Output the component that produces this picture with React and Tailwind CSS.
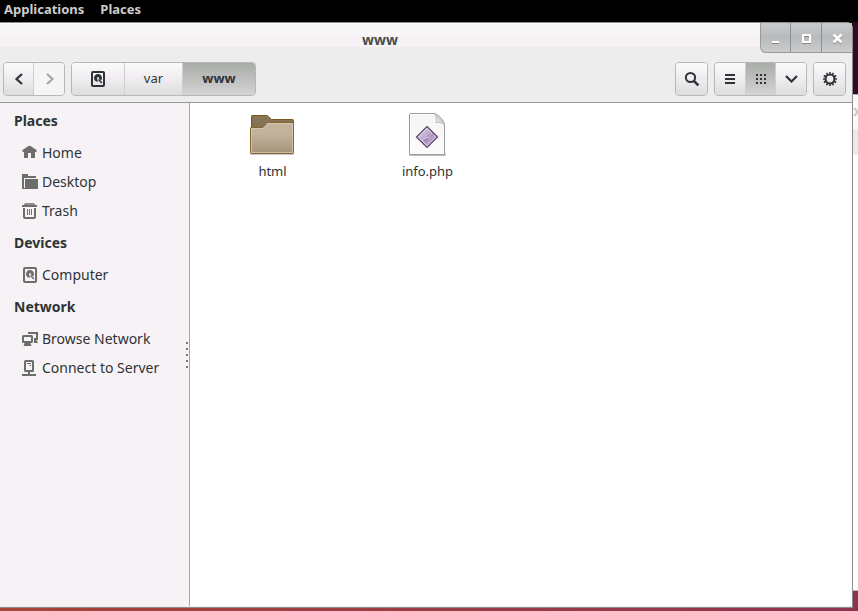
import clsx from "clsx";

const sidebar = [
  {
    title: "Places",
    items: [
      { label: "Home", Icon: HomeIcon },
      { label: "Desktop", Icon: DesktopIcon },
      { label: "Trash", Icon: TrashIcon },
    ],
  },
  { title: "Devices", items: [{ label: "Computer", Icon: DriveIcon }] },
  {
    title: "Network",
    items: [
      { label: "Browse Network", Icon: NetworkIcon },
      { label: "Connect to Server", Icon: ServerIcon },
    ],
  },
];

const files = [
  { name: "html", Icon: FolderIcon },
  { name: "info.php", Icon: PhpFileIcon },
];

function HomeIcon() {
  return (
    <svg width="16" height="16" viewBox="0 0 16 16" fill="currentColor" aria-hidden="true">
      <path d="M6.5 1 H8.500 L14.500 5 V7 H13 V13 H9 V8 H6 V13 H2 V7 H.5 V5 Z" />
    </svg>
  );
}

function DesktopIcon() {
  return (
    <svg width="16" height="16" viewBox="0 0 16 16" fill="currentColor" aria-hidden="true">
      <path d="M0 0 H6 V2 H14 V4 H2 V14 H16 V15 H0 Z" />
      <path d="M3 5 H16 V15 H3 Z" />
    </svg>
  );
}

function TrashIcon() {
  return (
    <svg width="16" height="16" viewBox="0 0 16 16" fill="none" stroke="currentColor" aria-hidden="true">
      <path d="M0 3 H15" strokeWidth="2" />
      <path d="M3 2 V1.500 Q3 1 4 1 H11 Q12 1 12 1.500 V2" strokeWidth="1.500" />
      <path d="M2 5 V14 Q2 15 3 15 H12 Q13 15 13 14 V5" strokeWidth="2" />
      <path d="M5.500 6 V12 M7.500 6 V12 M9.500 6 V12" />
    </svg>
  );
}

function DriveIcon() {
  return (
    <svg width="16" height="16" viewBox="0 0 16 16" fill="none" aria-hidden="true">
      <rect x="2" y="1" width="12" height="14" rx="1" stroke="currentColor" strokeWidth="2" />
      <path
        d="M8 3 C10.300 3 12 4.700 12 7 C12 8.200 11.500 9 11 9.600 L9 7.800 V6.200 H7.200 V8 L8 10.800 C5.800 11 4 9.200 4 7 C4 4.700 5.700 3 8 3 Z"
        fill="currentColor"
      />
      <path d="M8.500 8.500 L11.800 12" stroke="currentColor" strokeWidth="1.600" />
    </svg>
  );
}

function NetworkIcon() {
  return (
    <svg width="16" height="16" viewBox="0 0 16 16" fill="none" stroke="currentColor" strokeWidth="2" aria-hidden="true">
      <path d="M7 3 V2 H15 V8 H12" />
      <rect x="1" y="5" width="9" height="6" rx=".5" />
      <path d="M3 11 H8 L9.500 15 H1.500 Z" fill="currentColor" stroke="none" />
      <path d="M12 9 H14.500 L16 12 H12 Z" fill="currentColor" stroke="none" />
    </svg>
  );
}

function ServerIcon() {
  return (
    <svg width="16" height="16" viewBox="0 0 16 16" fill="none" stroke="currentColor" aria-hidden="true">
      <rect x="3" y="1" width="8" height="10" rx=".6" strokeWidth="2" />
      <path d="M5 3.500 H9 M7.500 5.500 H9" />
      <path d="M7 11 V14 M0 15 H14" strokeWidth="2" />
    </svg>
  );
}

function SearchIcon() {
  return (
    <svg width="16" height="16" viewBox="0 0 16 16" fill="none" stroke="currentColor" aria-hidden="true">
      <circle cx="6.5" cy="6.5" r="4.6" strokeWidth="2" />
      <path d="M9.8 9.8 L14.4 14.4" strokeWidth="2.6" />
    </svg>
  );
}

function ListIcon() {
  return (
    <svg width="16" height="16" viewBox="0 0 16 16" fill="currentColor" aria-hidden="true">
      <path d="M3 3 H13 V5 H3 Z M3 7 H13 V9 H3 Z M3 11 H13 V13 H3 Z" />
    </svg>
  );
}

function GridIcon() {
  return (
    <svg width="16" height="16" viewBox="0 0 16 16" stroke="currentColor" strokeWidth="2" strokeDasharray="2 2" aria-hidden="true">
      <path d="M3 4 H13 M3 8 H13 M3 12 H13" />
    </svg>
  );
}

function Chevron({ d }) {
  return (
    <svg width="16" height="16" viewBox="0 0 16 16" fill="none" stroke="currentColor" strokeWidth="2.2" aria-hidden="true">
      <path d={d} />
    </svg>
  );
}

function GearIcon() {
  return (
    <svg width="16" height="16" viewBox="0 0 16 16" fill="none" stroke="currentColor" aria-hidden="true">
      <circle cx="8" cy="8" r="4.5" strokeWidth="2.2" />
      {/* twelve teeth: one dash and one gap per 1/12 of the circle */}
      <circle cx="8" cy="8" r="6" strokeWidth="2.2" pathLength="24" strokeDasharray="1 1" strokeDashoffset=".5" />
    </svg>
  );
}

function FolderIcon() {
  return (
    <svg width="48" height="48" viewBox="1 -1 48 48" aria-hidden="true">
      <defs>
        <linearGradient id="folderFront" x1="0" y1="0" x2="0" y2="1">
          <stop offset="0" stopColor="#c4b49c" />
          <stop offset=".35" stopColor="#c2b39c" />
          <stop offset="1" stopColor="#a59378" />
        </linearGradient>
        <linearGradient id="folderBack" x1="0" y1="0" x2="0" y2="1">
          <stop offset="0" stopColor="#8a7758" />
          <stop offset="1" stopColor="#75634a" />
        </linearGradient>
      </defs>
      <rect x="2" y="42" width="44" height="2" rx="1" fill="#000" opacity=".22" />
      <path
        d="M3.500 40 V5 Q3.500 4.500 4 4.500 H18 Q19.500 4.500 20.500 5.500 L23.500 8.500 H44.500 Q45.500 8.500 45.500 9.500 V40 Z"
        fill="url(#folderBack)"
        stroke="#7c5a1c"
      />
      <path
        d="M2.500 17 Q2.500 16.500 3 16.500 H14 Q15.500 16.500 16.500 15 L18.500 12.500 Q19 11.500 20.500 11.500 H45 Q45.500 11.500 45.500 12 V41.500 Q45.500 42.500 44.500 42.500 H3.500 Q2.500 42.500 2.500 41.500 Z"
        fill="url(#folderFront)"
        stroke="#86662c"
      />
      <path
        d="M3.500 41.500 V17.500 H15 L19.500 12.500 H44.500 V41.500 Z"
        fill="none"
        stroke="#e0d3bf"
        strokeOpacity=".6"
      />
    </svg>
  );
}

function PhpFileIcon() {
  return (
    <svg width="48" height="48" viewBox="1 -1 48 48" aria-hidden="true">
      <defs>
        <linearGradient id="paper" x1="0" y1="0" x2="0" y2="1">
          <stop offset="0" stopColor="#f4f4f4" />
          <stop offset="1" stopColor="#fcfcfc" />
        </linearGradient>
        <linearGradient id="gem" x1="0" y1="0" x2="1" y2="1">
          <stop offset="0" stopColor="#dccfe4" />
          <stop offset="1" stopColor="#a285b6" />
        </linearGradient>
        <linearGradient id="fold" x1="0" y1="1" x2="1" y2="0">
          <stop offset="0" stopColor="#ffffff" />
          <stop offset="1" stopColor="#a8a8a8" />
        </linearGradient>
      </defs>
      <rect x="6" y="42" width="37" height="3" rx="1" fill="#000" opacity=".25" />
      <path
        d="M8 2.500 H31 C35 3 41.500 10 41.500 14 V42 Q41.500 43.500 40 43.500 H8 Q6.500 43.500 6.500 42 V4 Q6.500 2.500 8 2.500 Z"
        fill="url(#paper)"
        stroke="#999"
      />
      <path d="M7.500 42.500 V3.500 H31 M40.500 16 V42.500 H7.500" fill="none" stroke="#fff" />
      <path d="M31 2.500 C34 5 33 9 33 11.500 C37 11 40 12 41.500 14 C40 9 36 3 31 2.500 Z" fill="url(#fold)" stroke="#b0b0b0" strokeWidth=".8" />
      <path d="M24 15.500 L34.500 26 L24 36.500 L13.500 26 Z" fill="url(#gem)" stroke="#5c4069" strokeWidth="1.200" />
      <path d="M24 17.200 L32.800 26 L24 34.800 L15.200 26 Z" fill="none" stroke="#e3d8ea" strokeWidth=".9" />
      <path d="M18 28 L23 26 L25 24 L29 21 L31 24 L26 27 L23 32 L21 30 Z" fill="#85649f" opacity=".4" />
      <path d="M19 29 L24 26 L25 27 L29 22" fill="none" stroke="#efe6f4" strokeWidth=".9" opacity=".8" />
    </svg>
  );
}

function ButtonGroup({ label, children }) {
  return (
    <div
      role="group"
      aria-label={label}
      className="flex h-[34px] overflow-hidden rounded border border-[#b6b8b6] divide-x divide-[#cfcdcf]"
    >
      {children}
    </div>
  );
}

function ToolButton({ label, active, disabled, className = "w-[31px]", children }) {
  return (
    <button
      type="button"
      aria-label={label}
      disabled={disabled}
      className={clsx(
        "flex items-center justify-center",
        className,
        active && "bg-linear-to-b from-[#a9aca9] via-[#bebfbe] to-[#d4d4d4] font-bold",
        disabled && "bg-[#f5f5f5] text-[#a5a8a5]",
        !active && !disabled && "bg-linear-to-b from-[#fbfafb] via-[#efecef] to-[#dddddd]"
      )}
    >
      {children}
    </button>
  );
}

function TitleBar() {
  return (
    <div className="flex h-[39px] items-start">
      <h1 className="flex-1 pt-2 text-center text-sm leading-[18px] font-bold text-[#454d4d]">www</h1>
      <div className="flex h-[30px] divide-x divide-[#8c8e8f] overflow-hidden rounded-bl-md border-b border-l border-[#9a9c9d] bg-linear-to-b from-[#c9cacb] via-[#b9babc] to-[#cbcccd] text-white">
        <button type="button" aria-label="Minimize" className="flex w-[30px] items-center justify-center">
          <svg width="16" height="16" viewBox="0 0 16 16" aria-hidden="true">
            <path d="M4 13.500 H11" stroke="#85878a" />
            <path d="M4 12 H11" stroke="currentColor" strokeWidth="2" />
          </svg>
        </button>
        <button type="button" aria-label="Maximize" className="flex w-[31px] items-center justify-center">
          <svg width="16" height="16" viewBox="0 0 16 16" fill="none" aria-hidden="true">
            <path d="M4 13.500 H13 M6 6.500 H11" stroke="#85878a" />
            <path d="M5 5 H12 V12 H5 Z" stroke="currentColor" strokeWidth="2" />
          </svg>
        </button>
        <button type="button" aria-label="Close" className="flex w-[30px] items-center justify-center">
          <svg width="16" height="16" viewBox="0 0 16 16" fill="none" strokeWidth="2.600" aria-hidden="true">
            <path d="M4.500 5.500 L12.500 13.500 M12.500 5.500 L4.500 13.500" stroke="#85878a" />
            <path d="M4.500 4.500 L12.500 12.500 M12.500 4.500 L4.500 12.500" stroke="currentColor" />
          </svg>
        </button>
      </div>
    </div>
  );
}

function Toolbar() {
  return (
    <div className="flex gap-1.5 pr-1.5 pb-1.5 pl-[3px]">
      <ButtonGroup label="History">
        <ToolButton label="Back" className="w-[30px]">
          <Chevron d="M11 3 L5.500 8 L11 13" />
        </ToolButton>
        <ToolButton label="Forward" className="w-[30px]" disabled>
          <Chevron d="M6 3 L11.500 8 L6 13" />
        </ToolButton>
      </ButtonGroup>
      <ButtonGroup label="Path">
        <ToolButton label="File system" className="w-[53px]">
          <DriveIcon />
        </ToolButton>
        <ToolButton className="w-[58px]">var</ToolButton>
        <ToolButton className="w-[72px]" active>
          www
        </ToolButton>
      </ButtonGroup>
      <div className="flex-1" />
      <ButtonGroup label="Search">
        <ToolButton label="Search">
          <SearchIcon />
        </ToolButton>
      </ButtonGroup>
      <ButtonGroup label="View">
        <ToolButton label="List view">
          <ListIcon />
        </ToolButton>
        <ToolButton label="Icon view" className="w-[30px]" active>
          <GridIcon />
        </ToolButton>
        <ToolButton label="View options" className="w-[30px]">
          <Chevron d="M3 5 L8.500 10.500 L14 5" />
        </ToolButton>
      </ButtonGroup>
      <ButtonGroup label="Settings">
        <ToolButton label="Settings">
          <GearIcon />
        </ToolButton>
      </ButtonGroup>
    </div>
  );
}

function Sidebar() {
  return (
    <aside className="flex w-[190px] shrink-0 border-r border-[#a5a5a5] bg-[#f7f2f6] text-sm">
      <nav className="flex-1">
        {sidebar.map(({ title, items }) => (
          <section key={title}>
            <h2 className="flex h-[35px] items-center pl-3.5 font-bold">{title}</h2>
            <ul>
              {items.map(({ label, Icon }) => (
                <li key={label}>
                  <a href="#" className="flex h-[29px] items-center gap-1 pl-[22px]">
                    <span className="text-[#6b6e6b]">
                      <Icon />
                    </span>
                    <span className="whitespace-nowrap">{label}</span>
                  </a>
                </li>
              ))}
            </ul>
          </section>
        ))}
      </nav>
      <div className="flex flex-col justify-center gap-1 pr-px">
        {[0, 1, 2, 3, 4].map((dot) => (
          <span key={dot} className="size-0.5 bg-[#777977]" />
        ))}
      </div>
    </aside>
  );
}

export default function App() {
  return (
    <div className="flex min-h-screen flex-col bg-black font-['Noto_Sans','Open_Sans',sans-serif] text-[13px] text-[#2e3436]">
      <header className="flex h-[22px] gap-4 bg-black pl-1 text-[13px] leading-[18px] font-bold text-[#cccccc]">
        <button type="button" className="h-[18px]">Applications</button>
        <button type="button" className="h-[18px]">Places</button>
      </header>

      <div className="flex flex-1">
        <div className="flex min-w-0 flex-1 flex-col">
          <main className="flex flex-1 flex-col rounded-tr-md border-t border-r border-b border-[#8a8d8d] bg-white">
            <div className="rounded-tr-md border-b border-[#939996] bg-[linear-gradient(#ffffff_1px,#f7f7f7_1px,#f7f7f7_12px,#f7f2f6_12px,#f7f2f6_24px,#ededed_24px)]">
              <TitleBar />
              <Toolbar />
            </div>
            <div className="flex flex-1 border-b border-[#ededed]">
              <Sidebar />
              <ul className="flex flex-1 flex-wrap content-start pt-[7px] pl-[5px]">
                {files.map(({ name, Icon }) => (
                  <li key={name} className="flex w-[155px] flex-col items-center">
                    <Icon />
                    <span className="mt-1 leading-[18px]">{name}</span>
                  </li>
                ))}
              </ul>
            </div>
          </main>
          <div className="h-[3px] bg-linear-to-r from-[#a84436] to-[#8f3450]" />
        </div>

        {/* edge of the window behind */}
        <div className="flex w-[5px] flex-col">
          <div className="h-[72px] bg-[#300a26]" />
          <div className="flex h-[35px] items-center overflow-hidden border-t border-[#b0b0b0] bg-[#fdfafc] text-[#c9c9c9]">
            <svg width="5" height="8" viewBox="0 0 5 8" fill="none" stroke="currentColor" strokeWidth="2" aria-hidden="true">
              <path d="M1 0 L5 4 L1 8" />
            </svg>
          </div>
          <div className="h-[26px] bg-[#ebebeb]" />
          <div className="flex-1 border-b border-[#b9b9b9] bg-white" />
          <div className="h-5 bg-[#8f3450]" />
        </div>
      </div>
    </div>
  );
}
